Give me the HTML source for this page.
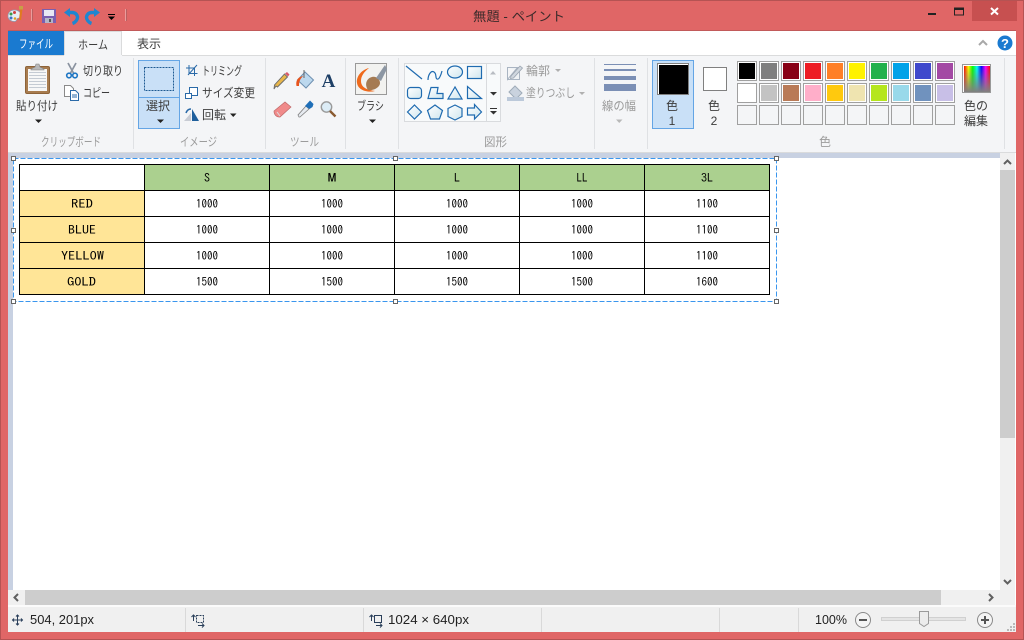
<!DOCTYPE html>
<html lang="ja"><head><meta charset="utf-8"><title>無題 - ペイント</title>
<style>
html,body{margin:0;padding:0;width:1024px;height:640px;overflow:hidden;background:#e06666}
svg{display:block}
text{font-family:"Liberation Sans","Noto Sans CJK JP",sans-serif;font-size:12px;fill:#3c3c3c}
.c{text-anchor:middle}
.g{fill:#9c9c9c}
.d{fill:#9a9a9a}
.t{font-family:"IPAGothic","Liberation Mono",monospace;font-size:12px;fill:#000;text-anchor:middle}
.s{font-size:12.5px;fill:#222}
.r{shape-rendering:crispEdges}
</style></head><body>
<svg width="1024" height="640" viewBox="0 0 1024 640" xmlns="http://www.w3.org/2000/svg">
<defs>
<linearGradient id="rb" x1="0" x2="1" y1="0" y2="0"><stop offset="0" stop-color="#f00"/><stop offset=".17" stop-color="#ff0"/><stop offset=".33" stop-color="#0f0"/><stop offset=".5" stop-color="#0ff"/><stop offset=".67" stop-color="#00f"/><stop offset=".83" stop-color="#f0f"/><stop offset="1" stop-color="#f00"/></linearGradient>
<linearGradient id="gy" x1="0" x2="0" y1="0" y2="1"><stop offset="0" stop-color="#808080" stop-opacity="0"/><stop offset="1" stop-color="#808080"/></linearGradient>
<linearGradient id="sf" x1="0" x2="1" y1="0" y2="1"><stop offset="0" stop-color="#fff"/><stop offset="1" stop-color="#cfe6ee"/></linearGradient>
</defs>
<!-- frame -->
<rect class="r" width="1024" height="640" fill="#e06666"/>
<rect class="r" width="1024" height="1" fill="#b55353"/>
<rect class="r" width="1" height="640" fill="#b55353"/>
<rect class="r" x="1023" width="1" height="640" fill="#b55353"/>
<rect class="r" y="639" width="1024" height="1" fill="#b55353"/>
<rect class="r" x="8" y="30" width="1008" height="1" fill="#c25a5a"/>
<!-- QAT -->
<g>
<path d="M8 16c0-4 3-6 6.500-6s6.500 2 6.500 5.500-2.500 2-3.500 3-1 3-3 3c-3.500 0-6.500-2-6.500-5.500z" fill="#e8eef5" stroke="#8b9bb0" stroke-width=".7"/>
<circle cx="11" cy="14" r="1.500" fill="#3a9a4a"/><circle cx="14.500" cy="12.500" r="1.500" fill="#d04040"/><circle cx="11" cy="18" r="1.500" fill="#3f72c8"/><circle cx="15" cy="18.500" r="1.300" fill="#e0a020"/>
<path d="M20 20l1.500-12" stroke="#e07a20" stroke-width="2.200"/><rect x="19" y="6" width="4" height="3.500" fill="#c8a048"/>
<rect class="r" x="31" y="9" width="1" height="12" fill="#ec9c9c"/><rect class="r" x="32" y="9" width="1" height="12" fill="#b96060"/>
<rect class="r" x="42" y="9" width="14" height="14" fill="#7a5fb0"/>
<rect class="r" x="44" y="10" width="10" height="6" fill="#e8e8f4"/>
<rect class="r" x="45" y="18" width="8" height="5" fill="#b5b5c8"/><rect class="r" x="49" y="19" width="2" height="3" fill="#555"/>
<path d="M67 12.500h5c4 0 5.500 3 5.500 5s-2 5-5 6" fill="none" stroke="#1f86d0" stroke-width="3.400"/><path d="M64 12.500l6-4.500v9z" fill="#1f86d0"/>
<path d="M97 12.500h-5c-4 0-5.500 3-5.500 5s2 5 5 6" fill="none" stroke="#1f86d0" stroke-width="3.400"/><path d="M100 12.500l-6-4.500v9z" fill="#1f86d0"/>
<rect class="r" x="108" y="14" width="7" height="1" fill="#000"/><path d="M108 16.500h7l-3.500 3.500z" fill="#000"/>
<rect class="r" x="125" y="9" width="1" height="12" fill="#ec9c9c"/><rect class="r" x="126" y="9" width="1" height="12" fill="#b96060"/>
</g>
<text x="519" y="21" class="c" textLength="92" lengthAdjust="spacingAndGlyphs" style="font-size:13px;fill:#3a2a2a">無題 - ペイント</text>
<!-- window buttons -->
<rect class="r" x="928" y="13" width="8" height="2" fill="#222"/>
<rect class="r" x="954.500" y="8" width="9" height="7" fill="none" stroke="#222"/><rect class="r" x="954" y="8" width="10" height="2" fill="#222"/>
<rect class="r" x="972" y="1" width="45" height="20" fill="#c75050"/>
<path d="M991 8l7 6.500M998 8l-7 6.500" stroke="#fff" stroke-width="2"/>
<!-- tabs -->
<rect class="r" x="8" y="31" width="1008" height="24" fill="#fff"/>
<rect class="r" x="8" y="31" width="56" height="24" fill="#1a7ad0"/>
<text x="36" y="48" class="c" textLength="34" lengthAdjust="spacingAndGlyphs" style="fill:#fff">ファイル</text>
<rect class="r" x="8" y="55" width="1008" height="1" fill="#dadbdc"/>
<rect class="r" x="64" y="31" width="58" height="25" fill="#f4f5f7"/>
<rect class="r" x="64" y="31" width="58" height="1" fill="#dadbdc"/><rect class="r" x="64" y="31" width="1" height="24" fill="#dadbdc"/><rect class="r" x="121" y="31" width="1" height="24" fill="#dadbdc"/>
<text x="93" y="49" class="c" textLength="30" lengthAdjust="spacingAndGlyphs">ホーム</text>
<text x="149" y="48" class="c">表示</text>
<path d="M979 45l4-4 4 4" fill="none" stroke="#a8a8a8" stroke-width="2"/>
<circle cx="1005" cy="43" r="7.500" fill="#1a7ad0"/><text x="1005" y="48" class="c" style="fill:#fff;font-size:13px;font-weight:bold">?</text>
<!-- ribbon -->
<rect class="r" x="8" y="56" width="1008" height="96" fill="#f4f5f7"/>
<rect class="r" x="8" y="152" width="1008" height="1" fill="#dadbdc"/>
<g fill="#dfe1e4" class="r"><rect x="133" y="58" width="1" height="91"/><rect x="265" y="58" width="1" height="91"/><rect x="345" y="58" width="1" height="91"/><rect x="398" y="58" width="1" height="91"/><rect x="594" y="58" width="1" height="91"/><rect x="647" y="58" width="1" height="91"/><rect x="1004" y="58" width="1" height="91"/></g>
<!-- paste -->
<rect x="25.500" y="66.500" width="24" height="27" rx="1.500" fill="#a87c4f" stroke="#8d6339"/>
<rect class="r" x="28" y="69" width="19" height="22" fill="#f7f7f7"/>
<g class="r" fill="#c5cbd3"><rect x="29" y="72" width="17" height="1"/><rect x="29" y="75" width="17" height="1"/><rect x="29" y="78" width="17" height="1"/><rect x="29" y="81" width="17" height="1"/><rect x="29" y="84" width="17" height="1"/><rect x="29" y="87" width="17" height="1"/></g>
<path d="M31 69l4-2 1-3h3l1 3 4 2v1H31z" fill="#b8b8b8" stroke="#808080" stroke-width=".6"/>
<text x="37" y="110" class="c" textLength="42" lengthAdjust="spacingAndGlyphs">貼り付け</text>
<path d="M35 119.500h7l-3.500 3.500z" fill="#222"/>
<!-- cut copy -->
<path d="M68 63l6 11M76 63l-6 11" stroke="#8a93a0" stroke-width="1.700" fill="none"/>
<circle cx="69" cy="75.500" r="2.300" fill="none" stroke="#1f77c4" stroke-width="1.600"/><circle cx="75" cy="75.500" r="2.300" fill="none" stroke="#1f77c4" stroke-width="1.600"/>
<text x="83" y="75" textLength="40" lengthAdjust="spacingAndGlyphs">切り取り</text>
<path d="M64.500 85.500h6l3 3v8h-9z" fill="#fff" stroke="#8a8a8a"/>
<path d="M70.500 90.500h5l3 3v7h-8z" fill="#fff" stroke="#2a6aa8"/><path d="M72 95h5M72 97h5" stroke="#2a6aa8"/>
<text x="83" y="97" textLength="27" lengthAdjust="spacingAndGlyphs">コピー</text>
<!-- select -->
<rect class="r" x="138.500" y="60.500" width="41" height="68" fill="#c9e0f7" stroke="#64a5e5"/>
<rect class="r" x="139" y="97" width="40" height="1" fill="#64a5e5"/>
<rect class="r" x="144.500" y="67.500" width="29" height="23" fill="#c9e0f7" stroke="#1e5a92" stroke-dasharray="2 1"/>
<text x="158" y="110" class="c">選択</text>
<path d="M157 119.500h7l-3.500 3.500z" fill="#222"/>
<!-- crop resize rotate -->
<path d="M189 65v8.500h8.500M186 68h8.500v8M188 75l9-10" fill="none" stroke="#2a6aa8"/>
<text x="202" y="75" textLength="40" lengthAdjust="spacingAndGlyphs">トリミング</text>
<rect class="r" x="189.500" y="87.500" width="8" height="8" fill="#fff" stroke="#2a6aa8"/><rect class="r" x="185.500" y="93.500" width="6" height="5" fill="#fff" stroke="#2a6aa8"/>
<text x="202" y="97" textLength="53" lengthAdjust="spacingAndGlyphs">サイズ変更</text>
<path d="M184 121l7-8v8z" fill="#c8ccd4"/><path d="M192 121v-12l7 12z" fill="#1f5f9c"/><path d="M186 113c1-3 3-4 5-4" fill="none" stroke="#2a6aa8" stroke-width="1.500"/>
<text x="202" y="119" textLength="24" lengthAdjust="spacingAndGlyphs">回転</text>
<path d="M230 113.500h6.500l-3.250 3.500z" fill="#222"/>
<text x="71" y="146" class="c g" textLength="60" lengthAdjust="spacingAndGlyphs">クリップボード</text>
<text x="198.500" y="146" class="c g" textLength="37" lengthAdjust="spacingAndGlyphs">イメージ</text>
<!-- tools -->
<path d="M276 86l-2 3 .5-4 10-11 3 3-10 10z" fill="#e8b64a" stroke="#6a6a6a" stroke-width=".9"/><path d="M285 73.500l2-1.500 2.500 2.500-1.500 2z" fill="#d85a6a"/>
<path d="M305 72l8.500 8-7.500 8-8.500-8z" fill="#bcd8ee" stroke="#6d8fb0"/><path d="M296.500 86c-1-5 1-9 7-10-3 2-4.500 5-4.500 10z" fill="#e8541c"/><path d="M304 70v8" stroke="#666"/>
<text x="328.500" y="87" class="c" style="font-family:'Liberation Serif',serif;font-weight:bold;font-size:19px;fill:#1e3f66">A</text>
<path d="M274 111l11-9 6 5-11 10c-3 .5-6-2-6-6z" fill="#f08a8a" stroke="#c06a6a" stroke-width=".7"/><path d="M277 112l3 4" stroke="#dcdcdc"/>
<path d="M299 117l-1-2 8-9 3 3-9 8z" fill="#e6eaf0" stroke="#808080" stroke-width=".8"/><path d="M305 106l5-5.500 3.500 3.500-1 3-3 2z" fill="#1f6fb8"/>
<circle cx="326.500" cy="107" r="5.200" fill="#dcecf6" stroke="#9a9a9a" stroke-width="1.400"/><path d="M330 111l5.500 5.500" stroke="#8a5a30" stroke-width="2.400"/>
<text x="304.500" y="146" class="c g" textLength="29" lengthAdjust="spacingAndGlyphs">ツール</text>
<!-- brush -->
<rect class="r" x="355.500" y="63.500" width="31" height="31" fill="#f2f2f0" stroke="#999"/>
<path d="M369 68c-8 2-13 9-12 15 1 7 10 10 18 8-7-1-14-3-14-10 0-5 3-9 8-13z" fill="#ef6a1c"/>
<path d="M368 90c-4-6-1-12 4-13 4-1 8 2 8 6 0 4-6 8-12 7z" fill="#a57b52"/><path d="M376 78l9-13 2 4-6 12z" fill="#8c96a3"/>
<text x="370.500" y="110" class="c" textLength="27" lengthAdjust="spacingAndGlyphs">ブラシ</text>
<path d="M369 119.500h7l-3.500 3.500z" fill="#222"/>
<!-- shapes -->
<rect class="r" x="404.500" y="63.500" width="96" height="58" fill="#f8fafb" stroke="#d9dbde"/>
<rect class="r" x="486" y="64" width="1" height="57" fill="#d9dbde"/>
<path d="M490 74.500h6l-3-3.500z" fill="#b8bcc2"/><path d="M490 92h7l-3.500 3.500z" fill="#333"/><rect class="r" x="490" y="108" width="7" height="1" fill="#333"/><path d="M490 111h7l-3.500 3.500z" fill="#333"/>
<g fill="url(#sf)" stroke="#1f6bb0" stroke-width="1.200">
<path d="M406 66l16 13" fill="none"/>
<path d="M428 80c0-5 3-10 6-8s1 6 3 7 4-4 5-8" fill="none"/>
<ellipse cx="455" cy="72" rx="7.500" ry="6"/>
<rect x="467.500" y="66.500" width="14" height="12"/>
<rect x="407.500" y="87.500" width="14" height="11" rx="3"/>
<path d="M428 98.500l3-11h7l-1 6h6v5z"/>
<path d="M455 87l-7 12h14z"/>
<path d="M467.500 86.500v12h14z"/>
<path d="M414.500 105l7 7-7 7-7-7z"/>
<path d="M435 105l7.500 5.500-3 8.500h-9l-3-8.500z"/>
<path d="M455 105l7 3.500v8l-7 3.500-7-3.500v-8z"/>
<path d="M467.500 108h7v-3.500l7 7.500-7 7v-4h-7z"/>
</g>
<!-- outline / fill -->
<path d="M507.500 67.500h10l-10 12z M507.500 67.500v12h12v-8" fill="#eef1f4" stroke="#a9b4c2"/><path d="M511 76l9-10 2.500 2-9 10-3 .5z" fill="#cfd6de" stroke="#9aa4b0" stroke-width=".8"/>
<text x="526" y="75" class="d" textLength="24" lengthAdjust="spacingAndGlyphs">輪郭</text>
<path d="M555 69h6l-3 3z" fill="#b0b0b0"/>
<path d="M515 86l7 7-6 6-7-7z" fill="#c9d2de" stroke="#9fabb9"/><rect class="r" x="507" y="97" width="17" height="4" fill="#bcc9da"/>
<text x="526" y="97" class="d" textLength="49" lengthAdjust="spacingAndGlyphs">塗りつぶし</text>
<path d="M579 92h6l-3 3z" fill="#b0b0b0"/>
<text x="495.500" y="146" class="c g" textLength="23" lengthAdjust="spacingAndGlyphs">図形</text>
<!-- line width -->
<g class="r" fill="#7b8fb5"><rect x="604" y="64" width="32" height="1"/><rect x="604" y="69" width="32" height="2"/><rect x="604" y="76" width="32" height="4"/><rect x="604" y="84" width="32" height="7"/></g>
<text x="619" y="110" class="c d" textLength="34" lengthAdjust="spacingAndGlyphs">線の幅</text>
<path d="M616 119.500h6.500l-3.250 3.500z" fill="#b8b8b8"/>
<!-- colours -->
<rect class="r" x="652.500" y="60.500" width="41" height="68" fill="#c9e0f7" stroke="#64a5e5"/>
<rect class="r" x="657.500" y="63.500" width="31" height="31" fill="#fff" stroke="#808080"/>
<rect class="r" x="659" y="65" width="29" height="29" fill="#000"/>
<text x="672" y="110" class="c">色</text><text x="672" y="125" class="c">1</text>
<rect class="r" x="703.500" y="67.500" width="23" height="23" fill="#fff" stroke="#808080"/>
<text x="714" y="110" class="c">色</text><text x="714" y="125" class="c">2</text>
<g class="r" id="pal">
<g fill="#fff" stroke="#a0a0a0">
<rect x="737.500" y="61.500" width="19" height="19"/><rect x="759.500" y="61.500" width="19" height="19"/><rect x="781.500" y="61.500" width="19" height="19"/><rect x="803.500" y="61.500" width="19" height="19"/><rect x="825.500" y="61.500" width="19" height="19"/><rect x="847.500" y="61.500" width="19" height="19"/><rect x="869.500" y="61.500" width="19" height="19"/><rect x="891.500" y="61.500" width="19" height="19"/><rect x="913.500" y="61.500" width="19" height="19"/><rect x="935.500" y="61.500" width="19" height="19"/>
<rect x="737.500" y="83.500" width="19" height="19"/><rect x="759.500" y="83.500" width="19" height="19"/><rect x="781.500" y="83.500" width="19" height="19"/><rect x="803.500" y="83.500" width="19" height="19"/><rect x="825.500" y="83.500" width="19" height="19"/><rect x="847.500" y="83.500" width="19" height="19"/><rect x="869.500" y="83.500" width="19" height="19"/><rect x="891.500" y="83.500" width="19" height="19"/><rect x="913.500" y="83.500" width="19" height="19"/><rect x="935.500" y="83.500" width="19" height="19"/>
</g>
<g fill="#f4f5f7" stroke="#a0a0a0">
<rect x="737.500" y="105.500" width="19" height="19"/><rect x="759.500" y="105.500" width="19" height="19"/><rect x="781.500" y="105.500" width="19" height="19"/><rect x="803.500" y="105.500" width="19" height="19"/><rect x="825.500" y="105.500" width="19" height="19"/><rect x="847.500" y="105.500" width="19" height="19"/><rect x="869.500" y="105.500" width="19" height="19"/><rect x="891.500" y="105.500" width="19" height="19"/><rect x="913.500" y="105.500" width="19" height="19"/><rect x="935.500" y="105.500" width="19" height="19"/>
</g>
<rect x="739" y="63" width="16" height="16" fill="#000000"/><rect x="761" y="63" width="16" height="16" fill="#7f7f7f"/><rect x="783" y="63" width="16" height="16" fill="#880015"/><rect x="805" y="63" width="16" height="16" fill="#ed1c24"/><rect x="827" y="63" width="16" height="16" fill="#ff7f27"/><rect x="849" y="63" width="16" height="16" fill="#fff200"/><rect x="871" y="63" width="16" height="16" fill="#22b14c"/><rect x="893" y="63" width="16" height="16" fill="#00a2e8"/><rect x="915" y="63" width="16" height="16" fill="#3f48cc"/><rect x="937" y="63" width="16" height="16" fill="#a349a4"/>
<rect x="739" y="85" width="16" height="16" fill="#ffffff"/><rect x="761" y="85" width="16" height="16" fill="#c3c3c3"/><rect x="783" y="85" width="16" height="16" fill="#b97a57"/><rect x="805" y="85" width="16" height="16" fill="#ffaec9"/><rect x="827" y="85" width="16" height="16" fill="#ffc90e"/><rect x="849" y="85" width="16" height="16" fill="#efe4b0"/><rect x="871" y="85" width="16" height="16" fill="#b5e61d"/><rect x="893" y="85" width="16" height="16" fill="#99d9ea"/><rect x="915" y="85" width="16" height="16" fill="#7092be"/><rect x="937" y="85" width="16" height="16" fill="#c8bfe7"/>
</g>
<rect class="r" x="962.500" y="64.500" width="28" height="28" fill="#fff" stroke="#999"/>
<rect class="r" x="964" y="66" width="26" height="26" fill="url(#rb)"/><rect class="r" x="964" y="66" width="26" height="26" fill="url(#gy)"/>
<text x="976" y="110" class="c">色の</text><text x="976" y="125" class="c">編集</text>
<text x="825" y="146" class="c g">色</text>
<!-- workspace -->
<rect class="r" x="8" y="153" width="992" height="437" fill="#c8d1e2"/>
<rect class="r" x="13" y="158" width="987" height="432" fill="#fff"/>
<!-- image table -->
<rect class="r" x="19" y="164" width="751" height="131" fill="#fff"/>
<rect class="r" x="145" y="165" width="624" height="25" fill="#abd08f"/>
<rect class="r" x="20" y="191" width="124" height="103" fill="#ffe597"/>
<g class="r" fill="#000">
<rect x="19" y="164" width="751" height="1"/><rect x="19" y="190" width="751" height="1"/><rect x="19" y="216" width="751" height="1"/><rect x="19" y="242" width="751" height="1"/><rect x="19" y="268" width="751" height="1"/><rect x="19" y="294" width="751" height="1"/>
<rect x="19" y="164" width="1" height="131"/><rect x="144" y="164" width="1" height="131"/><rect x="269" y="164" width="1" height="131"/><rect x="394" y="164" width="1" height="131"/><rect x="519" y="164" width="1" height="131"/><rect x="644" y="164" width="1" height="131"/><rect x="769" y="164" width="1" height="131"/>
</g>
<g>
<text class="t" x="207" y="182">S</text><text class="t" x="332" y="182" textLength="9" lengthAdjust="spacingAndGlyphs">M</text><text class="t" x="457" y="182">L</text><text class="t" x="582" y="182" textLength="11" lengthAdjust="spacingAndGlyphs">LL</text><text class="t" x="707" y="182" textLength="12" lengthAdjust="spacingAndGlyphs">3L</text>
<text class="t" x="82" y="208" textLength="22" lengthAdjust="spacingAndGlyphs">RED</text><text class="t" x="207" y="208" textLength="22" lengthAdjust="spacingAndGlyphs">1000</text><text class="t" x="332" y="208" textLength="22" lengthAdjust="spacingAndGlyphs">1000</text><text class="t" x="457" y="208" textLength="22" lengthAdjust="spacingAndGlyphs">1000</text><text class="t" x="582" y="208" textLength="22" lengthAdjust="spacingAndGlyphs">1000</text><text class="t" x="707" y="208" textLength="22" lengthAdjust="spacingAndGlyphs">1100</text>
<text class="t" x="82" y="234" textLength="28" lengthAdjust="spacingAndGlyphs">BLUE</text><text class="t" x="207" y="234" textLength="22" lengthAdjust="spacingAndGlyphs">1000</text><text class="t" x="332" y="234" textLength="22" lengthAdjust="spacingAndGlyphs">1000</text><text class="t" x="457" y="234" textLength="22" lengthAdjust="spacingAndGlyphs">1000</text><text class="t" x="582" y="234" textLength="22" lengthAdjust="spacingAndGlyphs">1000</text><text class="t" x="707" y="234" textLength="22" lengthAdjust="spacingAndGlyphs">1100</text>
<text class="t" x="82.500" y="260" textLength="43" lengthAdjust="spacingAndGlyphs">YELLOW</text><text class="t" x="207" y="260" textLength="22" lengthAdjust="spacingAndGlyphs">1000</text><text class="t" x="332" y="260" textLength="22" lengthAdjust="spacingAndGlyphs">1000</text><text class="t" x="457" y="260" textLength="22" lengthAdjust="spacingAndGlyphs">1000</text><text class="t" x="582" y="260" textLength="22" lengthAdjust="spacingAndGlyphs">1000</text><text class="t" x="707" y="260" textLength="22" lengthAdjust="spacingAndGlyphs">1100</text>
<text class="t" x="81.500" y="286" textLength="29" lengthAdjust="spacingAndGlyphs">GOLD</text><text class="t" x="207" y="286" textLength="22" lengthAdjust="spacingAndGlyphs">1500</text><text class="t" x="332" y="286" textLength="22" lengthAdjust="spacingAndGlyphs">1500</text><text class="t" x="457" y="286" textLength="22" lengthAdjust="spacingAndGlyphs">1500</text><text class="t" x="582" y="286" textLength="22" lengthAdjust="spacingAndGlyphs">1500</text><text class="t" x="707" y="286" textLength="22" lengthAdjust="spacingAndGlyphs">1600</text>
</g>
<!-- selection -->
<rect class="r" x="13.500" y="158.500" width="763" height="143" fill="none" stroke="#3a96ee" stroke-dasharray="5 2"/>
<g class="r" fill="#fff" stroke="#666">
<rect x="11.500" y="156.500" width="4" height="4"/><rect x="393.500" y="156.500" width="4" height="4"/><rect x="774.500" y="156.500" width="4" height="4"/>
<rect x="11.500" y="228.500" width="4" height="4"/><rect x="774.500" y="228.500" width="4" height="4"/>
<rect x="11.500" y="299.500" width="4" height="4"/><rect x="393.500" y="299.500" width="4" height="4"/><rect x="774.500" y="299.500" width="4" height="4"/>
</g>
<!-- scrollbars -->
<rect class="r" x="1000" y="153" width="15" height="437" fill="#f0f0f0"/>
<rect class="r" x="1000" y="170" width="15" height="268" fill="#cdcdcd"/>
<path d="M1004 164l3.500-3.500 3.500 3.500" fill="none" stroke="#606060" stroke-width="2"/>
<path d="M1004 580l3.500 3.500 3.500-3.500" fill="none" stroke="#606060" stroke-width="2"/>
<rect class="r" x="8" y="590" width="1007" height="15" fill="#f0f0f0"/>
<rect class="r" x="25" y="590" width="916" height="15" fill="#cdcdcd"/>
<path d="M18 594l-3.500 3.500 3.500 3.500" fill="none" stroke="#606060" stroke-width="2"/>
<path d="M989 594l3.500 3.500-3.500 3.500" fill="none" stroke="#606060" stroke-width="2"/>
<rect class="r" x="1015" y="153" width="1" height="453" fill="#fff"/>
<rect class="r" x="8" y="605" width="1008" height="2" fill="#fbfbfb"/>
<!-- status -->
<rect class="r" x="8" y="607" width="1008" height="25" fill="#f0f0f0"/>
<g class="r" fill="#d9d9d9"><rect x="185" y="608" width="1" height="24"/><rect x="363" y="608" width="1" height="24"/><rect x="541" y="608" width="1" height="24"/><rect x="719" y="608" width="1" height="24"/><rect x="798" y="608" width="1" height="24"/></g>
<path d="M17.500 615v10M12.500 620h10M16 616.500l1.500-1.500 1.500 1.500M16 623.500l1.500 1.500 1.500-1.500M14 618.500l-1.500 1.500 1.500 1.500M21 618.500l1.500 1.500-1.500 1.500" fill="none" stroke="#2a3f5a"/>
<text x="30" y="624" class="s" textLength="64" lengthAdjust="spacingAndGlyphs">504, 201px</text>
<path d="M193.500 615v6M191.500 617l2-2 2 2M204 625.500h-6M202 623.500l2 2-2 2" fill="none" stroke="#2a3f5a"/>
<rect class="r" x="196.500" y="615.500" width="7" height="7" fill="none" stroke="#2a3f5a" stroke-dasharray="2 1"/>
<path d="M371.500 615v6M369.500 617l2-2 2 2M382 625.500h-6M380 623.500l2 2-2 2" fill="none" stroke="#2a3f5a"/>
<rect class="r" x="374.500" y="615.500" width="7" height="7" fill="none" stroke="#2a3f5a"/>
<text x="388" y="624" class="s" textLength="81" lengthAdjust="spacingAndGlyphs">1024 × 640px</text>
<text x="815" y="624" class="s" textLength="32" lengthAdjust="spacingAndGlyphs">100%</text>
<circle cx="863" cy="620" r="7.500" fill="#f4f4f4" stroke="#8a8a8a"/><rect class="r" x="859" y="619" width="8" height="2" fill="#555"/>
<rect class="r" x="881.500" y="617.500" width="84" height="3" fill="#e4e4e4" stroke="#d0d0d0"/>
<path d="M919.500 611.500h9v12l-4.500 3-4.500-3z" fill="#ececec" stroke="#9a9a9a"/>
<circle cx="985" cy="620" r="7.500" fill="#f4f4f4" stroke="#8a8a8a"/><rect class="r" x="981" y="619" width="8" height="2" fill="#555"/><rect class="r" x="984" y="616" width="2" height="8" fill="#555"/>
<g class="r" fill="#b8b8b8"><rect x="1013" y="623" width="2" height="2"/><rect x="1010" y="626" width="2" height="2"/><rect x="1013" y="626" width="2" height="2"/><rect x="1007" y="629" width="2" height="2"/><rect x="1010" y="629" width="2" height="2"/><rect x="1013" y="629" width="2" height="2"/></g>
</svg>
</body></html>
